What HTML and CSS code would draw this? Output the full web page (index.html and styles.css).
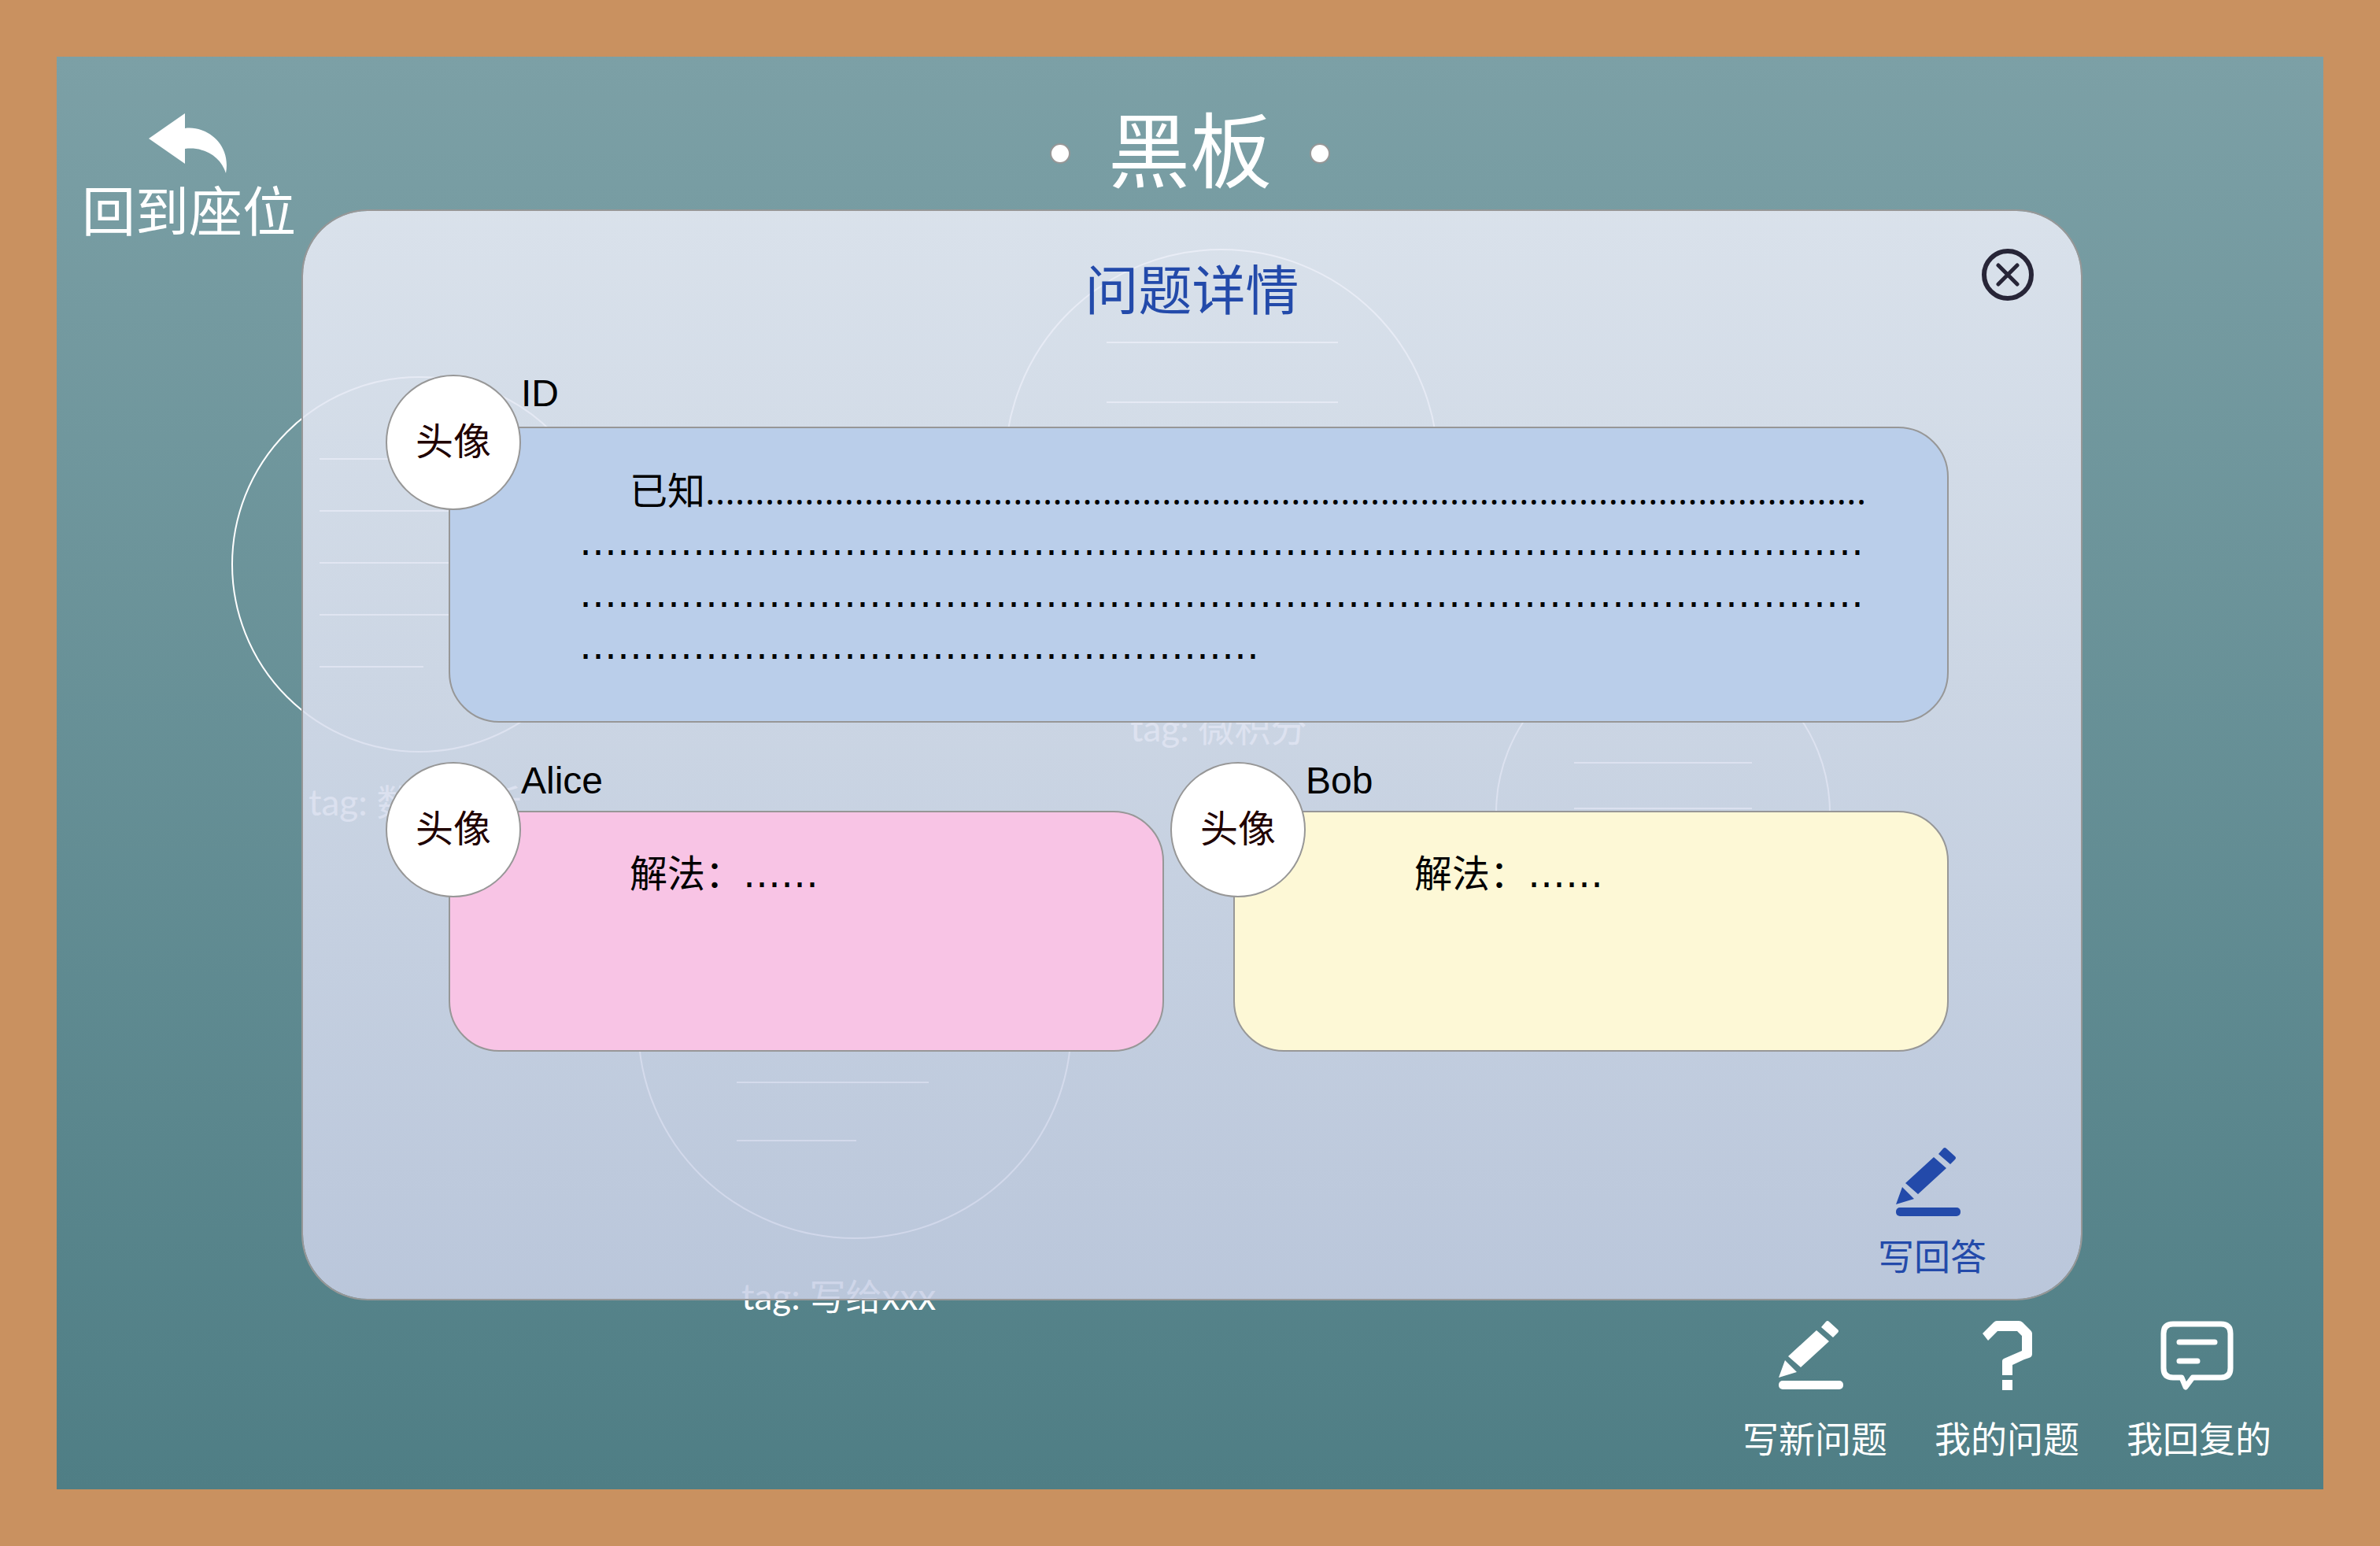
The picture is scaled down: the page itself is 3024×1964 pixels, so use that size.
FILE: index.html
```html
<!DOCTYPE html>
<html lang="zh-CN">
<head>
<meta charset="utf-8">
<title>黑板</title>
<link rel="stylesheet" href="styles.css">
</head>
<body>
<div class="board">
  <!-- Notes pinned on the board, behind the dialog -->
  <div class="notes">
    <article class="note note-analysis">
      <div class="ring"><i class="rule"></i><i class="rule"></i><i class="rule"></i><i class="rule"></i><i class="rule rule-short"></i></div>
      <p class="tag">tag: 数学分析</p>
    </article>
    <article class="note note-calculus">
      <div class="ring"><i class="rule"></i><i class="rule"></i><i class="rule"></i></div>
      <p class="tag">tag: 微积分</p>
    </article>
    <article class="note note-small">
      <div class="ring"><i class="rule"></i><i class="rule"></i></div>
    </article>
    <article class="note note-letter">
      <div class="ring"><i class="rule"></i><i class="rule rule-short"></i></div>
      <p class="tag">tag: 写给xxx</p>
    </article>
  </div>

  <button class="action back" type="button">
    <svg width="100" height="76" viewBox="0 0 100 76" aria-hidden="true"><path fill="currentColor" d="M-1 32 45 0V19C71 15 104 38 97 76 91 56 71 42 45 45V64Z"/></svg>
    <span>回到座位</span>
  </button>

  <header class="board-head">
    <i class="dot"></i>
    <h1>黑板</h1>
    <i class="dot"></i>
  </header>

  <main class="panel">
    <header class="panel-head">
      <h2>问题详情</h2>
      <button class="close" type="button" aria-label="关闭">
        <svg width="66" height="66" viewBox="0 0 66 66" fill="none" stroke="currentColor" stroke-width="6" stroke-linecap="round" aria-hidden="true"><circle cx="33" cy="33" r="30"/><path stroke-width="5" d="M21 21 45 45M45 21 21 45"/></svg>
      </button>
    </header>

    <div class="posts">
      <article class="post question">
        <div class="avatar">头像</div>
        <h3 class="author">ID</h3>
        <div class="card card-blue">
          <p class="lead">已知<span class="stops">.....................................................................................................................</span></p>
          <p><span class="dots">…………………………………………………………………………………………</span></p>
          <p><span class="dots">…………………………………………………………………………………………</span></p>
          <p><span class="dots">………………………………………………</span></p>
        </div>
      </article>

      <article class="post">
        <div class="avatar">头像</div>
        <h3 class="author">Alice</h3>
        <div class="card card-pink"><p>解法：<span class="dots">……</span></p></div>
      </article>

      <article class="post">
        <div class="avatar">头像</div>
        <h3 class="author">Bob</h3>
        <div class="card card-yellow"><p>解法：<span class="dots">……</span></p></div>
      </article>
    </div>

    <button class="action answer" type="button">
      <svg width="92" height="88" viewBox="0 0 92 88" fill="currentColor" aria-hidden="true"><path d="M54 8 60 1Q62 -1 64 1L75 11Q77 13 75 15L69 21ZM48 12 64 26 28 59 12 45ZM8 50 23 65 0 72Z"/><rect y="76" width="82" height="11" rx="5"/></svg>
      <span>写回答</span>
    </button>
  </main>

  <nav class="toolbar">
    <button class="action" type="button">
      <svg width="92" height="88" viewBox="0 0 92 88" fill="currentColor" aria-hidden="true"><path d="M54 8 60 1Q62 -1 64 1L75 11Q77 13 75 15L69 21ZM48 12 64 26 28 59 12 45ZM8 50 23 65 0 72Z"/><rect y="76" width="82" height="11" rx="5"/></svg>
      <span>写新问题</span>
    </button>
    <button class="action" type="button">
      <svg width="63" height="88" viewBox="0 0 63 88" fill="currentColor" aria-hidden="true"><path d="M0 16 14 2Q16 0 18 0H46Q49 0 51 2L61 12Q63 14 63 16V42Q63 46 59 47L53 49 38 56V69H25V51Q25 49 27 48L50 38V19L44 13H19L7 25ZM25 75H38V88H25Z"/></svg>
      <span>我的问题</span>
    </button>
    <button class="action" type="button">
      <svg width="98" height="88" viewBox="0 0 98 88" fill="none" stroke="currentColor" stroke-width="7" stroke-linejoin="round" stroke-linecap="round" aria-hidden="true"><path d="M16 4H77Q89 4 89 16V60Q89 72 77 72H41L32 84 27 72H16Q4 72 4 60V16Q4 4 16 4ZM24 27H69M24 51H47"/></svg>
      <span>我回复的</span>
    </button>
  </nav>
</div>
</body>
</html>
```
FILE: styles.css
```css
* { box-sizing: border-box; }

body {
  margin: 0;
  background: #c99160;
  color: #000;
  font-family: "Liberation Sans", "Noto Sans CJK SC", sans-serif;
  font-size: 48px;
  line-height: 66px;
}

h1, h2, h3, p { margin: 0; font-weight: 400; }

button {
  padding: 0;
  border: 0;
  background: none;
  color: inherit;
  font: inherit;
  cursor: pointer;
}

svg { display: block; overflow: visible; }

/* Board */
.board {
  position: relative;
  display: grid;
  grid-template-columns: 311px minmax(0, 1fr) 306px;
  grid-template-rows: 194px auto 1fr;
  min-height: 100vh;
  border: 72px solid #c99160;
  background: linear-gradient(#7ca0a6, #4f7e85) padding-box;
  color: #fff;
}

.board > * { position: relative; }

.board-head {
  grid-area: 1 / 1 / 2 / 4;
  display: flex;
  justify-content: center;
  align-items: center;
  gap: 48px;
  padding-top: 52px;
}

.board-head h1 { font-size: 104px; line-height: 104px; }

.dot {
  width: 26px;
  height: 26px;
  border: 2px solid #979797;
  border-radius: 50%;
  background: #fff;
}

.action {
  display: flex;
  flex-direction: column;
  align-items: center;
  gap: 40px;
  font-size: 46px;
  line-height: 46px;
  white-space: nowrap;
}

.back {
  grid-area: 1 / 1 / 3 / 2;
  place-self: start;
  gap: 16px;
  margin: 72px 0 0 32px;
  font-size: 68px;
  line-height: 68px;
}

.toolbar {
  grid-area: 3 / 1 / 4 / 4;
  display: flex;
  justify-content: flex-end;
  align-items: flex-start;
  gap: 60px;
  padding: 26px 66px 40px;
}

/* Pinned notes */
.board > .notes {
  position: absolute;
  inset: 0;
  overflow: hidden;
}

.note { position: absolute; }

.ring {
  display: flex;
  flex-direction: column;
  border: 2px solid #fff;
  border-radius: 50%;
}

.rule { height: 2px; background: #fff; }

.tag {
  font-family: Lato, "Noto Sans CJK SC", sans-serif;
  font-size: 46px;
  line-height: 46px;
  white-space: nowrap;
}

.note-analysis { left: calc(50% - 1218px); top: 406px; width: 478px; }
.note-analysis .ring { height: 478px; padding: 102px 110px 0; gap: 64px; }
.note-analysis .rule-short { width: 132px; }
.note-analysis .tag { padding: 40px 0 0 98px; }

.note-calculus { left: calc(50% - 236px); top: 244px; width: 552px; }
.note-calculus .ring { height: 552px; padding: 116px 126px 0 128px; gap: 74px; }
.note-calculus .tag { padding: 34px 0 0 160px; }

.note-small { left: calc(50% + 388px); top: 748px; width: 426px; }
.note-small .ring { height: 426px; padding: 146px 98px 0; gap: 56px; }

.note-letter { left: calc(50% - 702px); top: 962px; width: 552px; }
.note-letter .ring { height: 540px; padding: 338px 180px 0 124px; gap: 72px; }
.note-letter .rule-short { width: 152px; }
.note-letter .tag { padding: 50px 0 0 132px; }

/* Question dialog */
.panel {
  grid-area: 2 / 2 / 3 / 3;
  display: flex;
  flex-direction: column;
  border: 2px solid #979797;
  border-radius: 84px;
  background: linear-gradient(rgba(231, 235, 245, 0.88), rgba(200, 208, 230, 0.88)) padding-box;
  color: #000;
}

.panel-head {
  display: grid;
  grid-template-columns: 1fr auto 1fr;
  align-items: start;
  height: 208px;
  padding: 48px 60px 0;
}

.panel-head h2 {
  grid-column: 2;
  padding-top: 20px;
  color: #234aaa;
  font-size: 68px;
  line-height: 68px;
}

.close { justify-self: end; color: #272537; }

.posts {
  display: grid;
  grid-template-columns: repeat(2, minmax(0, 1fr));
  gap: 50px 8px;
  padding: 0 168px 0 105px;
}

.post { position: relative; padding-left: 80px; }

.question { grid-column: 1 / -1; }

.avatar {
  position: absolute;
  left: 0;
  top: 0;
  display: flex;
  justify-content: center;
  align-items: center;
  width: 172px;
  height: 172px;
  border: 2px solid #979797;
  border-radius: 50%;
  background: #fff;
  color: #1f0000;
}

.author {
  height: 62px;
  padding-left: 92px;
  font-size: 48px;
  line-height: 48px;
}

.question .author { height: 66px; }

.card {
  min-height: 306px;
  padding: 46px 64px 62px 228px;
  border: 2px solid #979797;
  border-radius: 64px;
}

.card p { height: 66px; white-space: nowrap; }

.question .card { padding-left: 164px; }

.lead { text-indent: 64px; }

.stops { font-family: "Open Sans", sans-serif; }

/* Each ellipsis is one em wide, so its dots keep an even pitch */
.dots { font-family: "DejaVu Sans", sans-serif; line-height: 48px; }

.card-blue { background: #baceea; }
.card-pink { background: #f8c4e5; }
.card-yellow { background: #fdf8d6; }

.answer {
  align-self: flex-end;
  gap: 28px;
  margin: 122px 120px 30px 0;
  color: #234aaa;
}
```
